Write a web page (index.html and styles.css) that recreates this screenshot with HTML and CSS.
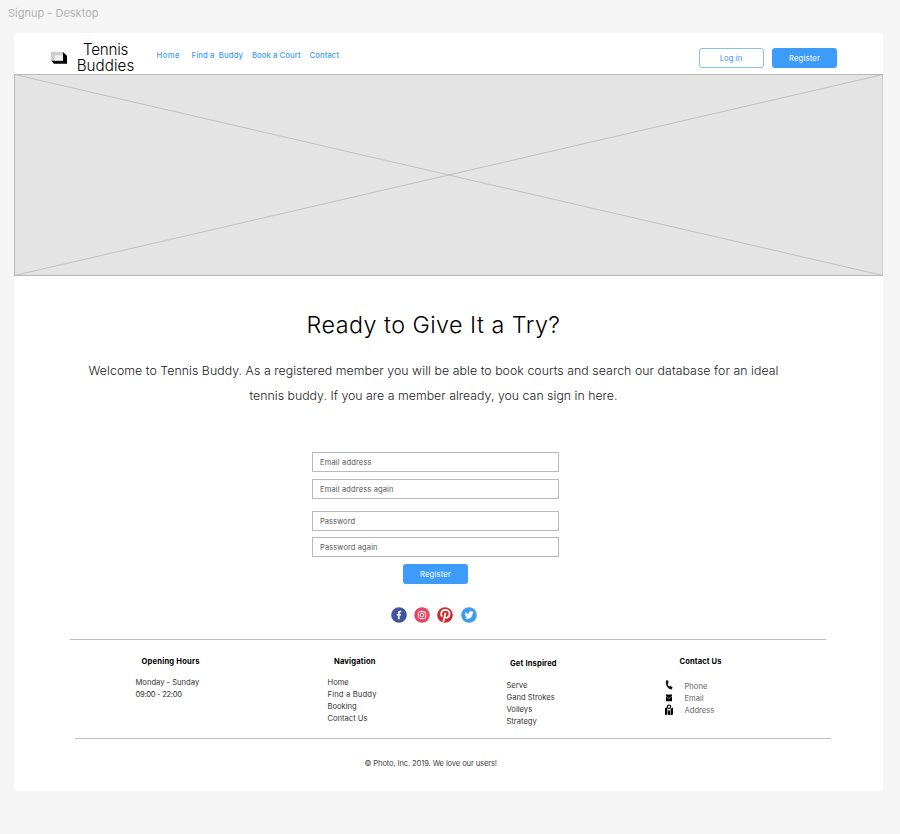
FILE: index.html
```
<!DOCTYPE html>
<html lang="en">
<head>
<meta charset="utf-8">
<title>Signup - Desktop</title>
<link rel="stylesheet" href="styles.css">
</head>
<body>
<div class="frame-label">Signup - Desktop</div>
<div class="frame">
  <header class="header">
    <svg class="logo" width="16" height="13" viewBox="0 0 16 13"><path d="M0 8.5 3 11.7H16V3.8L12 0V8.5z" fill="#000"/><path d="M0 0H12V8.5H0z" fill="#cdcdcd"/><path d="M4 3.3H12V8.5H3z" fill="#f0f0f0"/></svg>
    <div class="brand"><div class="brand-top">Tennis</div><div>Buddies</div></div>
    <nav class="nav">
      <a class="nav-home">Home</a>
      <a class="nav-find">Find a&nbsp; Buddy</a>
      <a class="nav-book">Book a Court</a>
      <a class="nav-contact">Contact</a>
    </nav>
    <div class="actions">
      <button class="button outline">Log in</button>
      <button class="button">Register</button>
    </div>
  </header>
  <svg class="hero" viewBox="0 0 869.5 202">
    <rect x=".5" y=".5" width="868.5" height="201" fill="#e4e4e4" stroke="#b8b8b8"/>
    <path d="M.5 .5 869 201.5M869 .5 .5 201.5" stroke="#b4b4b4" stroke-width=".75" fill="none"/>
  </svg>
  <section class="intro">
    <h1 class="title">Ready to Give It a Try?</h1>
    <p class="lead"><span class="lead-a">Welcome to Tennis Buddy. As a registered member you will be able to book courts and search our database for an ideal</span><br><span class="lead-b">tennis buddy. If you are a member already, you can sign in here.</span></p>
  </section>
  <form class="form">
    <div class="field f-email">Email address</div>
    <div class="field f-again">Email address again</div>
    <div class="field f-pass">Password</div>
    <div class="field f-pass-again">Password again</div>
    <button class="button submit" type="button">Register</button>
  </form>
  <div class="social">
    <svg class="icon" viewBox="0 0 16 16"><circle cx="8" cy="8" r="7.8" fill="#42549b"/><path d="M8.6 12.2V8.6H9.9L10.1 7H8.6V6.1C8.6 5.6 8.8 5.3 9.4 5.3H10.2V3.9C9.9 3.8 9.5 3.8 9.1 3.8 7.8 3.8 7 4.5 7 5.8V7H5.8V8.6H7V12.2z" fill="#fff"/></svg>
    <svg class="icon" viewBox="0 0 16 16"><circle cx="8" cy="8" r="7.8" fill="#e64764"/><g fill="none" stroke="#fff" stroke-width=".9"><rect x="4.4" y="4.4" width="7.2" height="7.2" rx="1.8"/><circle cx="8" cy="8" r="1.8"/></g><circle cx="10.2" cy="5.8" r=".5" fill="#fff"/></svg>
    <svg class="icon" viewBox="0 0 16 16"><circle cx="8" cy="8" r="7.8" fill="#cb2d31"/><path d="M5.2 9.6C3 7.3 4.2 2.8 8.3 2.8 11.4 2.8 13 5 12.5 7.5 12 10.4 9.3 11.6 7.5 10M8.5 5.7 6.3 15" fill="none" stroke="#fff" stroke-width="1.7"/></svg>
    <svg class="icon" viewBox="0 0 16 16"><circle cx="8" cy="8" r="7.8" fill="#3d9bf2"/><path d="M12.6 5.2 11.6 6.3C11.7 9.7 9.2 12 6.5 12 5.4 12 4.4 11.7 3.6 11.2 4.6 11.3 5.4 11 6.1 10.5 5.2 10.4 4.7 9.9 4.5 9.2H5.2C4.3 8.9 3.9 8.2 3.9 7.3L4.7 7.5C3.9 6.9 3.7 5.8 4.2 4.9 5.2 6 6.4 6.7 7.9 6.8 7.6 5 8.4 4.1 9.6 4.1 10.2 4.1 10.6 4.3 11 4.7L12.2 4.3 11.6 5.3z" fill="#fff"/></svg>
  </div>
  <footer class="footer">
    <hr class="rule">
    <div class="columns">
      <div class="col col-hours">
        <h2 class="col-title">Opening Hours</h2>
        <div>Monday - Sunday</div>
        <div class="hours">09:00 - 22:00</div>
      </div>
      <div class="col col-nav">
        <h2 class="col-title">Navigation</h2>
        <div>Home</div>
        <div class="wide">Find a Buddy</div>
        <div>Booking</div>
        <div>Contact Us</div>
      </div>
      <div class="col col-inspired">
        <h2 class="col-title">Get Inspired</h2>
        <div>Serve</div>
        <div>Gand Strokes</div>
        <div>Volleys</div>
        <div>Strategy</div>
      </div>
      <div class="col col-contact">
        <h2 class="col-title">Contact Us</h2>
        <div class="contact">
          <div class="glyphs">
            <svg width="8" height="10" viewBox="0 0 8 10"><path d="M1.2 .3 3.3 .6 3.4 3.5 2.6 4C2.9 5.2 3.5 6 4.5 6.5L5.4 5.8 7.6 7.6 6.6 9.4C3 9.5 -.1 5.2 1.2 .3z" fill="#111"/></svg>
            <svg width="8" height="8" viewBox="0 0 8 8"><path d="M1 .5H7V7.2H1z" fill="#000"/><path d="M1.2 2.2 4 4.6 6.8 2.2" fill="none" stroke="#aaa" stroke-width=".8"/></svg>
            <svg width="8" height="12" viewBox="0 0 8 12"><path d="M0 4.2 2 3.2V10.4L0 11.2zM2.6 4.5 4 7.5 5.4 4.5V11.2L2.6 10.4zM6 4.6 8 3.6V10.4L6 11.2z" fill="#000"/><circle cx="4" cy="2.8" r="1.7" fill="none" stroke="#111" stroke-width="1.2"/></svg>
          </div>
          <div class="contact-text"><div>Phone</div><div>Email</div><div>Address</div></div>
        </div>
      </div>
    </div>
    <hr class="rule rule-low">
    <div class="copyright">© Photo, Inc. 2019. We love our users!</div>
  </footer>
</div>
</body>
</html>
```
FILE: styles.css
```
* { box-sizing: border-box; }
body { margin: 0; background: #f5f5f5; font-family: Inter, "Liberation Sans", sans-serif; white-space: nowrap; }
.frame-label { height: 33px; padding: 3px 0 0 8px; font-size: 11px; line-height: 21px; color: #b3b3b3; }
.frame { width: 869.5px; height: 758px; margin-left: 13.5px; background: #fff; color: #000; }

.header { display: flex; height: 41px; padding-left: 37.5px; }
.logo { margin-top: 18.5px; }
.brand { width: 60px; margin: 8.5px 0 0 8.5px; font-size: 15.2px; line-height: 16px; font-weight: 300; text-align: center; letter-spacing: .036px; }
.brand-top { letter-spacing: -.25px; }
.nav { display: flex; margin: 16px 0 0 21px; height: 14px; font-size: 7.7px; line-height: 14px; color: #3d9bf2; font-weight: 500; }
.nav-home { width: 35px; letter-spacing: .42px; }
.nav-find { width: 60.5px; letter-spacing: .124px; }
.nav-book { width: 57.5px; letter-spacing: .07px; }
.nav-contact { letter-spacing: .086px; }
.actions { display: flex; gap: 8.5px; margin: 15px 46px 0 auto; }
.button { width: 65px; height: 20px; padding: 1px 0 0; border: 0; border-radius: 3px; background: #3d9bfa; color: #fff; font: 400 7.7px/20px Inter, sans-serif; letter-spacing: .17px; text-align: center; }
.outline { border: 1px solid #83c1f8; background: #fff; color: #2f94f2; line-height: 18px; letter-spacing: .05px; }

.hero { display: block; width: 869.5px; height: 202px; }

.intro { width: 690px; margin: 34px 0 0 75px; text-align: center; }
.title { margin: 0; font-size: 23.3px; line-height: 30px; font-weight: 300; letter-spacing: .464px; }
.lead { margin: 17.5px 0 0; font-size: 12.3px; line-height: 25px; font-weight: 300; color: #222; }
.lead-a { letter-spacing: .065px; }
.lead-b { letter-spacing: .025px; }

.form { width: 247px; margin: 44px 0 0 298.5px; }
.field { height: 20px; margin-bottom: 7px; padding-left: 7px; border: 1px solid #b9b9b9; font-size: 7.5px; line-height: 20px; color: #555; }
.f-email { letter-spacing: .173px; }
.f-again { margin-bottom: 12px; letter-spacing: .15px; }
.f-pass { margin-bottom: 6px; letter-spacing: .04px; }
.f-pass-again { letter-spacing: .108px; }
.submit { display: block; margin: 0 auto; }

.social { display: flex; gap: 7.4px; margin: 23px 0 0 377px; }
.icon { width: 16px; height: 16px; }

.rule { width: 756px; height: 1px; margin: 16px 0 0 56.5px; border: 0; background: #bdbdbd; }
.rule-low { margin: 0 0 0 61.5px; }
.columns { display: grid; grid-template-columns: 192px 179px 158px 1fr; height: 98px; padding: 16px 0 0 122px; font-size: 7.6px; line-height: 12px; color: #333; }
.col-title { margin: 0 0 9px; font-size: 7.6px; line-height: 12px; font-weight: 700; color: #000; letter-spacing: .15px; }
.col-hours .col-title { padding-left: 6px; letter-spacing: .19px; }
.col-nav .col-title { padding-left: 6.5px; }
.hours { letter-spacing: -.298px; }
.wide { letter-spacing: .176px; }
.col-inspired { padding-top: 2px; }
.col-inspired .col-title { margin-bottom: 10px; padding-left: 3.5px; }
.col-contact .col-title { margin-bottom: 12px; padding-left: 15px; letter-spacing: .1px; }
.contact { display: flex; gap: 12px; color: #666; }
.glyphs { display: flex; flex-direction: column; width: 8px; gap: 4px; margin-top: 0; }
.glyphs svg { display: block; }
.glyphs svg + svg + svg { margin-top: -2px; }
.contact-text { padding-top: 1px; }
.copyright { padding: 19px 0 0 351px; font-size: 7.6px; line-height: 12px; color: #444; letter-spacing: -.133px; }
```
